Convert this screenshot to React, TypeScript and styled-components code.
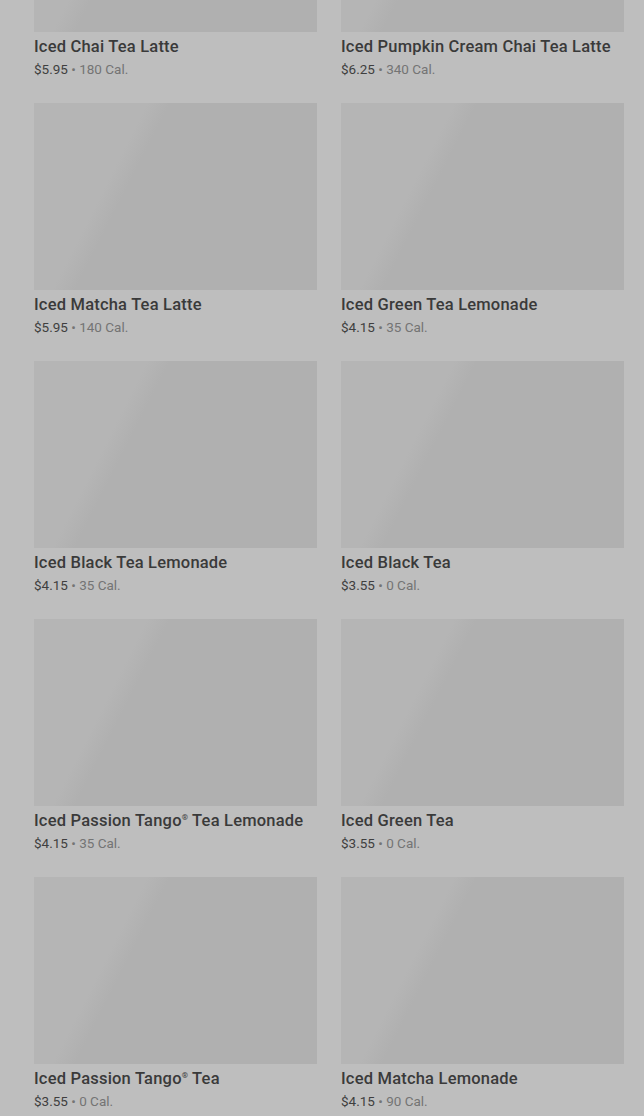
import React from 'react';
import styled, { createGlobalStyle } from 'styled-components';

const GlobalStyle = createGlobalStyle`
  html, body {
    margin: 0;
    padding: 0;
    background-color: #bebebe;
  }
  body {
    font-family: Roboto, 'Liberation Sans', Arial, sans-serif;
    -webkit-font-smoothing: antialiased;
  }
`;

const Viewport = styled.div`
  width: 644px;
  height: 1116px;
  overflow: hidden;
  background-color: #bebebe;
`;

const Grid = styled.div`
  display: grid;
  grid-template-columns: 283px 283px;
  column-gap: 24px;
  row-gap: 25px;
  padding: 0 20px 0 34px;
  margin-top: -155px;
`;

const Card = styled.div`
  display: flex;
  flex-direction: column;
`;

const Thumb = styled.div`
  width: 283px;
  height: 187px;
  background: linear-gradient(117deg, #b5b5b5 0%, #b5b5b5 30%, #b0b0b0 36%, #b0b0b0 100%);
  margin-bottom: 4px;
`;

const Title = styled.div`
  font-size: 16.5px;
  line-height: 22px;
  font-weight: 500;
  color: #3a3a3a;
  letter-spacing: 0.2px;
  white-space: nowrap;
`;

const Reg = styled.sup`
  font-size: 8px;
  line-height: 0;
  vertical-align: 6px;
`;

const Meta = styled.div`
  margin-top: 2px;
  font-size: 13.5px;
  line-height: 18px;
  color: #3f3f3f;
  white-space: nowrap;
`;

const Cal = styled.span`
  color: #747474;
`;

const items = [
  { name: 'Iced Chai Tea Latte', price: '$5.95', cal: '180 Cal.' },
  { name: 'Iced Pumpkin Cream Chai Tea Latte', price: '$6.25', cal: '340 Cal.' },
  { name: 'Iced Matcha Tea Latte', price: '$5.95', cal: '140 Cal.' },
  { name: 'Iced Green Tea Lemonade', price: '$4.15', cal: '35 Cal.' },
  { name: 'Iced Black Tea Lemonade', price: '$4.15', cal: '35 Cal.' },
  { name: 'Iced Black Tea', price: '$3.55', cal: '0 Cal.' },
  { name: 'Iced Passion Tango® Tea Lemonade', price: '$4.15', cal: '35 Cal.' },
  { name: 'Iced Green Tea', price: '$3.55', cal: '0 Cal.' },
  { name: 'Iced Passion Tango® Tea', price: '$3.55', cal: '0 Cal.' },
  { name: 'Iced Matcha Lemonade', price: '$4.15', cal: '90 Cal.' }
];

function renderName(name: string) {
  const parts = name.split('®');
  return parts.map((part, i) => (
    <React.Fragment key={i}>
      {part}
      {i < parts.length - 1 && <Reg>®</Reg>}
    </React.Fragment>
  ));
}

function App() {
  return (
    <Viewport>
      <GlobalStyle />
      <Grid>
        {items.map((item) => (
          <Card key={item.name}>
            <Thumb />
            <Title>{renderName(item.name)}</Title>
            <Meta>
              {item.price} <Cal>• {item.cal}</Cal>
            </Meta>
          </Card>
        ))}
      </Grid>
    </Viewport>
  );
}

export default App;
